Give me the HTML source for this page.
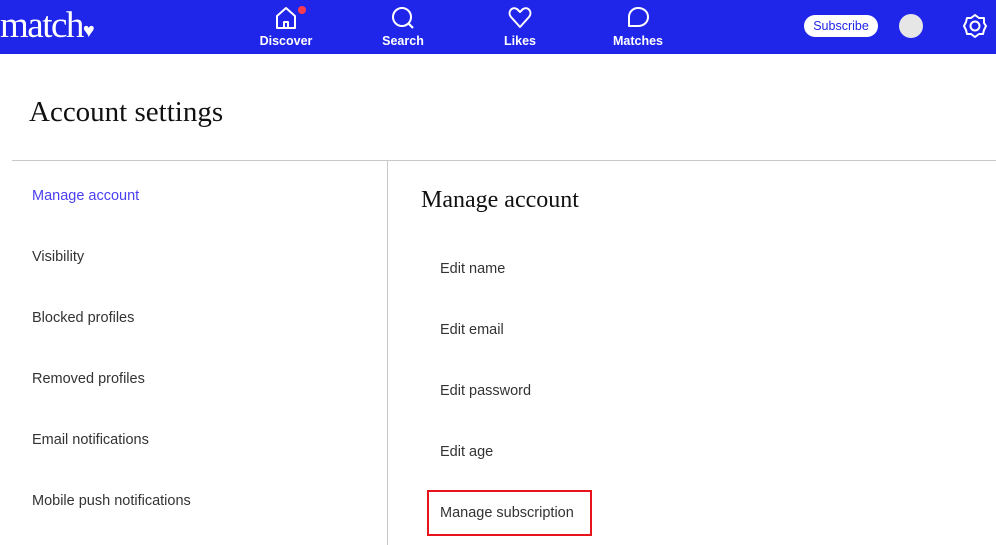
<!DOCTYPE html>
<html><head><style>
*{margin:0;padding:0;box-sizing:border-box}
body{width:996px;height:545px;overflow:hidden;background:#fff;font-family:"Liberation Sans",sans-serif;position:relative}
.nav{position:absolute;left:0;top:0;width:996px;height:54px;background:#1f25e9}
.logo{position:absolute;left:0;top:4px;color:#fff;font-family:"Liberation Serif",serif;font-size:37px;letter-spacing:-1.5px}
.ni{position:absolute;top:5px;width:80px;text-align:center;color:#fff;font-weight:bold;font-size:12.5px}
.ni svg{display:block;margin:0 auto 3px}
.sub{position:absolute;left:804px;top:15px;width:74px;height:22px;border-radius:11px;background:#fff;color:#1f25e9;font-size:12.5px;text-align:center;line-height:22px}
.av{position:absolute;left:899px;top:14px;width:24px;height:24px;border-radius:50%;background:#e6e6e6}
.t{position:absolute;font-family:"Liberation Serif",serif;color:#111}
.l{position:absolute;font-size:14.5px;color:#333}
.hl{position:absolute;left:12px;top:160px;width:984px;height:1px;background:#c8c8c8}
.vl{position:absolute;left:387px;top:160px;width:1px;height:385px;background:#c8c8c8}
.box{position:absolute;left:427px;top:490px;width:165px;height:46px;border:2px solid #e8141b}
</style></head><body>
<div class="nav">
<div class="logo">match<span style="font-size:20px">♥</span></div>
<div class="ni" style="left:246px"><svg width="24" height="26" viewBox="0 0 24 26"><path d="M3 11 L12 3 L21 11 V23 H3 Z M10 23 V17 H14 V23" fill="none" stroke="#fff" stroke-width="2" stroke-linejoin="round"/></svg>Discover</div>
<div style="position:absolute;left:298px;top:6px;width:8px;height:8px;border-radius:50%;background:#ff3b4f"></div>
<div class="ni" style="left:363px"><svg width="26" height="26" viewBox="0 0 26 26"><circle cx="12" cy="12" r="9" fill="none" stroke="#fff" stroke-width="2"/><path d="M18 18 L23 23" stroke="#fff" stroke-width="2.2"/></svg>Search</div>
<div class="ni" style="left:480px"><svg width="26" height="26" viewBox="0 0 26 26"><path d="M13 22 L4 12 C0 7 5 1 10 4 L13 7 L16 4 C21 1 26 7 22 12 Z" fill="none" stroke="#fff" stroke-width="2" stroke-linejoin="round"/></svg>Likes</div>
<div class="ni" style="left:598px"><svg width="26" height="26" viewBox="0 0 26 26"><path d="M13 3 C19 3 23 7 23 12 C23 17 19 21 13 21 H4 V12 C4 7 8 3 13 3 Z" fill="none" stroke="#fff" stroke-width="2" stroke-linejoin="round"/></svg>Matches</div>
<div class="sub">Subscribe</div>
<div class="av"></div>
<svg style="position:absolute;left:962px;top:13px" width="26" height="26" viewBox="0 0 26 26"><polygon points="13,2 17,5 22,5 22,10 24,13 22,17 21,21 17,21 13,24 9,21 5,21 4,17 2,13 4,9 5,5 9,5" fill="none" stroke="#fff" stroke-width="2" stroke-linejoin="round"/><circle cx="13" cy="13" r="4.5" fill="none" stroke="#fff" stroke-width="2"/></svg>
</div>
<div class="t" style="left:29px;top:96px;font-size:29px">Account settings</div>
<div class="hl"></div><div class="vl"></div>
<div class="l" style="left:32px;top:188px;color:#4a3ff0">Manage account</div>
<div class="l" style="left:32px;top:249px">Visibility</div>
<div class="l" style="left:32px;top:310px">Blocked profiles</div>
<div class="l" style="left:32px;top:371px">Removed profiles</div>
<div class="l" style="left:32px;top:432px">Email notifications</div>
<div class="l" style="left:32px;top:493px">Mobile push notifications</div>
<div class="t" style="left:421px;top:187px;font-size:24px">Manage account</div>
<div class="l" style="left:440px;top:261px">Edit name</div>
<div class="l" style="left:440px;top:322px">Edit email</div>
<div class="l" style="left:440px;top:383px">Edit password</div>
<div class="l" style="left:440px;top:444px">Edit age</div>
<div class="l" style="left:440px;top:505px">Manage subscription</div>
<div class="box"></div>
</body></html>
